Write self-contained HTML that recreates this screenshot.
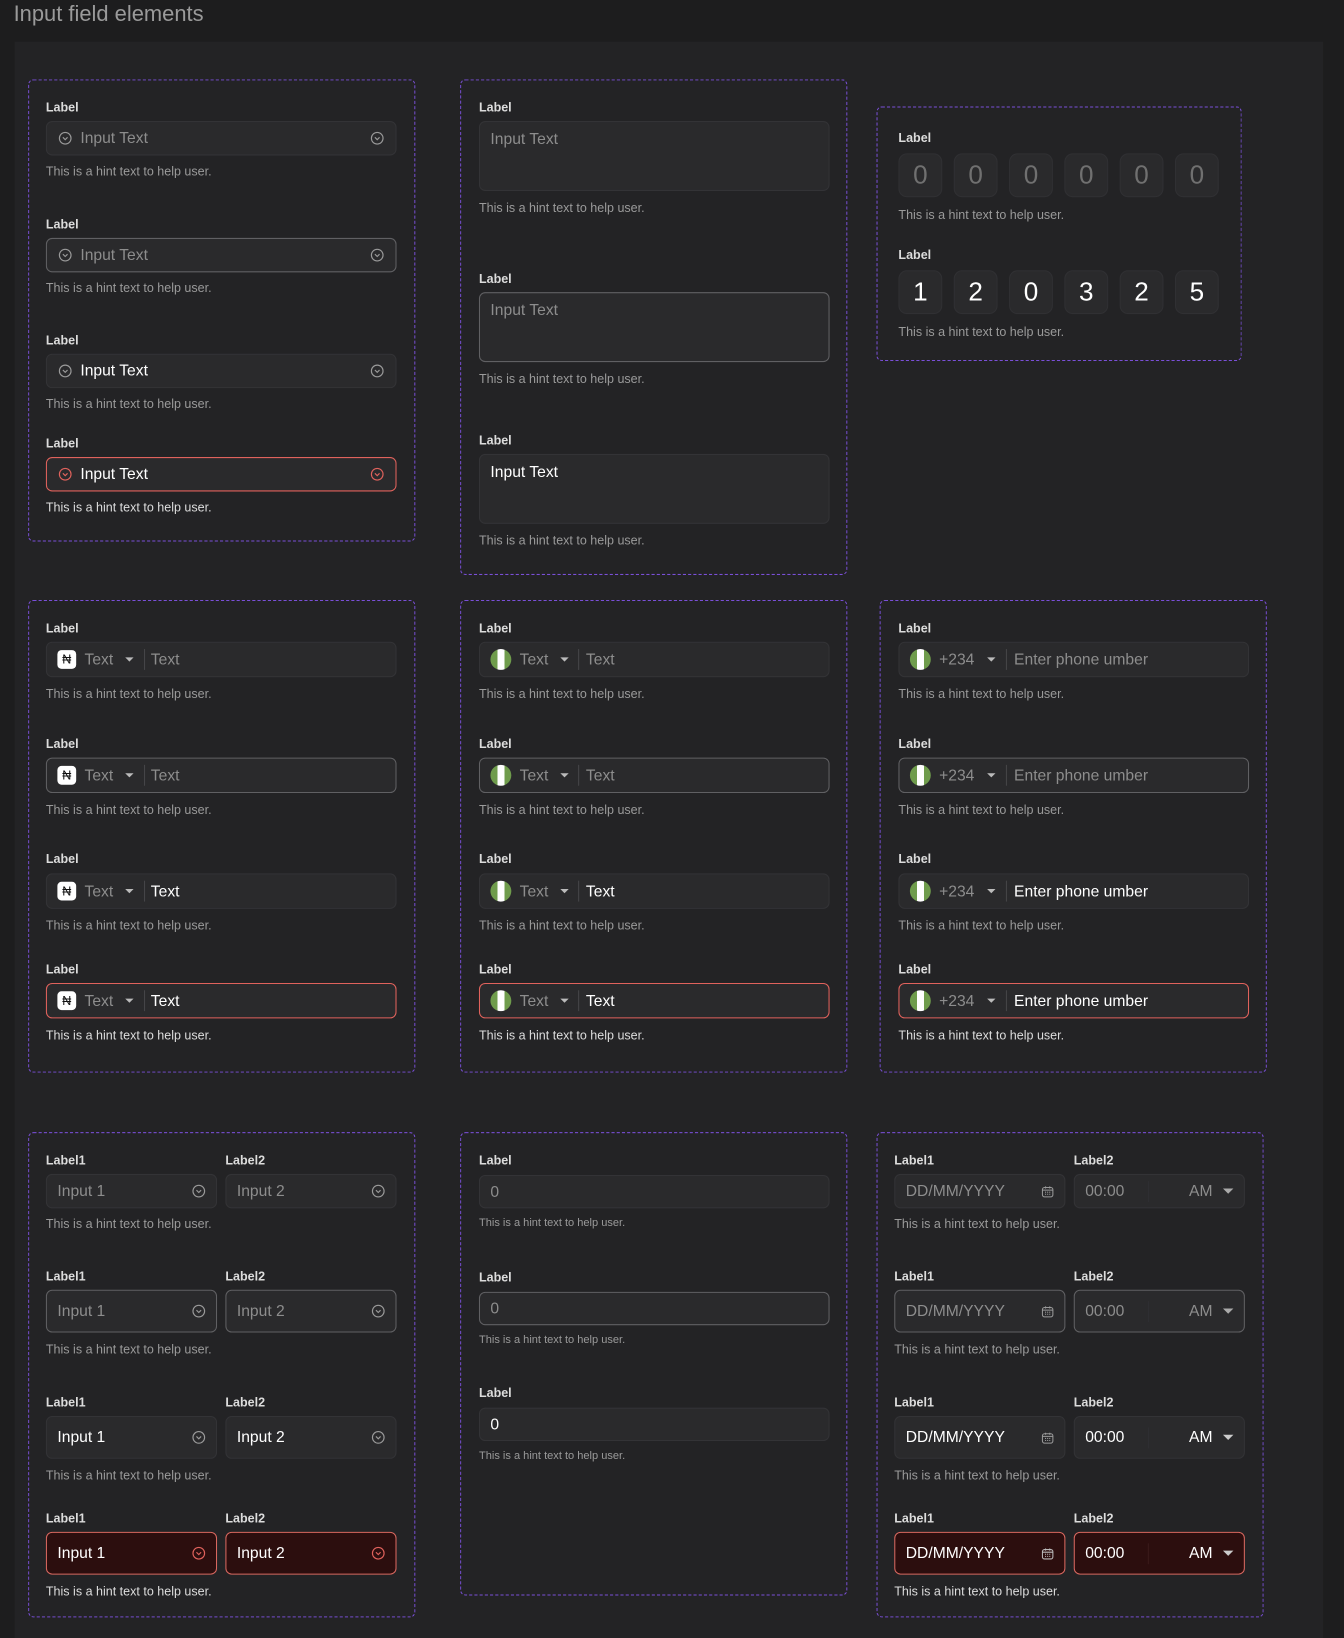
<!DOCTYPE html>
<html><head><meta charset="utf-8">
<style>
html,body{margin:0;padding:0;background:#1d1d1e;width:1344px;height:1636px;overflow:hidden;font-family:"Liberation Sans",sans-serif}
#s{position:absolute;left:0;top:0;width:1288px;height:1568px;transform:scale(1.04348);transform-origin:0 0}
.t{position:absolute;left:13px;top:2px;font-size:21px;color:#9a9a9a}
.p{position:absolute;left:14px;top:40px;width:1254px;height:1530px;background:#232325}
.b{position:absolute;border:1px dashed #7a4fd8;border-radius:5px;box-sizing:border-box}
.l{position:absolute;font-size:12px;font-weight:bold;color:#dcdcdc;line-height:14px;margin-top:0px}
.h{position:absolute;font-size:12px;color:#9a9a9a;line-height:14px;margin-top:0px}
.hs{font-size:10.6px}
.i{position:absolute;box-sizing:border-box;background:#2a2a2c;border:1px solid #333336;border-radius:6px;display:flex;align-items:center;font-size:15px;color:#8d8d8d;white-space:nowrap}
.hv{border-color:#606063}
.fl{color:#fff}
.er{border-color:#e0625c;color:#fff}
.erf{background:#2c0e0e;border-color:#d8675f;color:#fff}
.i svg{flex:none}
.ic{color:#9a9a9a}
.er .ic,.erf .ic{color:#e0625c}
.c{width:0;height:0;border-left:4px solid transparent;border-right:4px solid transparent;border-top:4px solid #bbb;flex:none}
.d{width:1px;height:20px;background:#454548;flex:none}
.fg{width:20px;height:20px;border-radius:50%;background:linear-gradient(90deg,#6f9c4c 33%,#fff 33%,#fff 67%,#6f9c4c 67%);flex:none}
.ng{width:18px;height:18px;border-radius:4px;background:#fff;color:#111;font-size:12px;display:flex;align-items:center;justify-content:center;flex:none}
.o{position:absolute;width:42px;height:42px;box-sizing:border-box;background:#2a2a2c;border:1px solid #303033;border-radius:8px;display:flex;align-items:center;justify-content:center;font-size:25px;color:#707070}
.o.w{color:#fff}
.ta{align-items:flex-start;padding:8px 10px}
</style></head><body><div id="s">
<div class="t">Input field elements</div>
<div class="p"></div>

<!-- col1 row1 -->
<div class="b" style="left:27px;top:76px;width:371px;height:443px"></div>
<div class="l" style="left:44px;top:96px">Label</div>
<div class="i" style="left:44px;top:116px;width:336px;height:33px;padding:0 11px"><svg class="ic" width="13" height="13" viewBox="0 0 14 14"><circle cx="7" cy="7" r="6" fill="none" stroke="currentColor" stroke-width="1.2"/><path d="M4.6 6l2.4 2.4L9.4 6" fill="none" stroke="currentColor" stroke-width="1.2"/></svg><span style="margin-left:8px;flex:1">Input Text</span><svg class="ic" width="13" height="13" viewBox="0 0 14 14"><circle cx="7" cy="7" r="6" fill="none" stroke="currentColor" stroke-width="1.2"/><path d="M4.6 6l2.4 2.4L9.4 6" fill="none" stroke="currentColor" stroke-width="1.2"/></svg></div>
<div class="h" style="left:44px;top:157px">This is a hint text to help user.</div>
<div class="l" style="left:44px;top:208px">Label</div>
<div class="i hv" style="left:44px;top:228px;width:336px;height:33px;padding:0 11px"><svg class="ic" width="13" height="13" viewBox="0 0 14 14"><circle cx="7" cy="7" r="6" fill="none" stroke="currentColor" stroke-width="1.2"/><path d="M4.6 6l2.4 2.4L9.4 6" fill="none" stroke="currentColor" stroke-width="1.2"/></svg><span style="margin-left:8px;flex:1">Input Text</span><svg class="ic" width="13" height="13" viewBox="0 0 14 14"><circle cx="7" cy="7" r="6" fill="none" stroke="currentColor" stroke-width="1.2"/><path d="M4.6 6l2.4 2.4L9.4 6" fill="none" stroke="currentColor" stroke-width="1.2"/></svg></div>
<div class="h" style="left:44px;top:269px">This is a hint text to help user.</div>
<div class="l" style="left:44px;top:319px">Label</div>
<div class="i fl" style="left:44px;top:339px;width:336px;height:33px;padding:0 11px"><svg class="ic" width="13" height="13" viewBox="0 0 14 14"><circle cx="7" cy="7" r="6" fill="none" stroke="currentColor" stroke-width="1.2"/><path d="M4.6 6l2.4 2.4L9.4 6" fill="none" stroke="currentColor" stroke-width="1.2"/></svg><span style="margin-left:8px;flex:1">Input Text</span><svg class="ic" width="13" height="13" viewBox="0 0 14 14"><circle cx="7" cy="7" r="6" fill="none" stroke="currentColor" stroke-width="1.2"/><path d="M4.6 6l2.4 2.4L9.4 6" fill="none" stroke="currentColor" stroke-width="1.2"/></svg></div>
<div class="h" style="left:44px;top:380px">This is a hint text to help user.</div>
<div class="l" style="left:44px;top:418px">Label</div>
<div class="i er" style="left:44px;top:438px;width:336px;height:33px;padding:0 11px"><svg class="ic" width="13" height="13" viewBox="0 0 14 14"><circle cx="7" cy="7" r="6" fill="none" stroke="currentColor" stroke-width="1.2"/><path d="M4.6 6l2.4 2.4L9.4 6" fill="none" stroke="currentColor" stroke-width="1.2"/></svg><span style="margin-left:8px;flex:1">Input Text</span><svg class="ic" width="13" height="13" viewBox="0 0 14 14"><circle cx="7" cy="7" r="6" fill="none" stroke="currentColor" stroke-width="1.2"/><path d="M4.6 6l2.4 2.4L9.4 6" fill="none" stroke="currentColor" stroke-width="1.2"/></svg></div>
<div class="h" style="left:44px;top:479px;color:#ddd">This is a hint text to help user.</div>

<!-- col2 row1 -->
<div class="b" style="left:441px;top:76px;width:371px;height:475px"></div>
<div class="l" style="left:459px;top:96px">Label</div>
<div class="i ta" style="left:459px;top:116px;width:336px;height:67px">Input Text</div>
<div class="h" style="left:459px;top:192px">This is a hint text to help user.</div>
<div class="l" style="left:459px;top:260px">Label</div>
<div class="i ta hv" style="left:459px;top:280px;width:336px;height:67px">Input Text</div>
<div class="h" style="left:459px;top:356px">This is a hint text to help user.</div>
<div class="l" style="left:459px;top:415px">Label</div>
<div class="i ta fl" style="left:459px;top:435px;width:336px;height:67px">Input Text</div>
<div class="h" style="left:459px;top:511px">This is a hint text to help user.</div>

<!-- col3 OTP -->
<div class="b" style="left:840px;top:102px;width:350px;height:244px"></div>
<div class="l" style="left:861px;top:125px">Label</div>
<div class="o" style="left:861px;top:147px">0</div><div class="o" style="left:914px;top:147px">0</div><div class="o" style="left:967px;top:147px">0</div><div class="o" style="left:1020px;top:147px">0</div><div class="o" style="left:1073px;top:147px">0</div><div class="o" style="left:1126px;top:147px">0</div>
<div class="h" style="left:861px;top:199px">This is a hint text to help user.</div>
<div class="l" style="left:861px;top:237px">Label</div>
<div class="o w" style="left:861px;top:259px">1</div><div class="o w" style="left:914px;top:259px">2</div><div class="o w" style="left:967px;top:259px">0</div><div class="o w" style="left:1020px;top:259px">3</div><div class="o w" style="left:1073px;top:259px">2</div><div class="o w" style="left:1126px;top:259px">5</div>
<div class="h" style="left:861px;top:311px">This is a hint text to help user.</div>

<!-- row2 col1 -->
<div class="b" style="left:27px;top:575px;width:371px;height:453px"></div>
<div class="l" style="left:44px;top:595px">Label</div>
<div class="i" style="left:44px;top:615px;width:336px;height:34px;padding:0 10px"><div class="ng">₦</div><span style="margin-left:8px">Text</span><div class="c" style="margin-left:11px"></div><div class="d" style="margin-left:10px"></div><span style="margin-left:6px">Text</span></div>
<div class="h" style="left:44px;top:658px">This is a hint text to help user.</div>
<div class="l" style="left:44px;top:706px">Label</div>
<div class="i hv" style="left:44px;top:726px;width:336px;height:34px;padding:0 10px"><div class="ng">₦</div><span style="margin-left:8px">Text</span><div class="c" style="margin-left:11px"></div><div class="d" style="margin-left:10px"></div><span style="margin-left:6px">Text</span></div>
<div class="h" style="left:44px;top:769px">This is a hint text to help user.</div>
<div class="l" style="left:44px;top:816px">Label</div>
<div class="i" style="left:44px;top:837px;width:336px;height:34px;padding:0 10px"><div class="ng">₦</div><span style="margin-left:8px">Text</span><div class="c" style="margin-left:11px"></div><div class="d" style="margin-left:10px"></div><span style="margin-left:6px;color:#fff">Text</span></div>
<div class="h" style="left:44px;top:880px">This is a hint text to help user.</div>
<div class="l" style="left:44px;top:922px">Label</div>
<div class="i er" style="left:44px;top:942px;width:336px;height:34px;padding:0 10px"><div class="ng">₦</div><span style="margin-left:8px;color:#8d8d8d">Text</span><div class="c" style="margin-left:11px"></div><div class="d" style="margin-left:10px"></div><span style="margin-left:6px">Text</span></div>
<div class="h" style="left:44px;top:985px;color:#ddd">This is a hint text to help user.</div>

<!-- row2 col2 -->
<div class="b" style="left:441px;top:575px;width:371px;height:453px"></div>
<div class="l" style="left:459px;top:595px">Label</div>
<div class="i" style="left:459px;top:615px;width:336px;height:34px;padding:0 10px"><div class="fg"></div><span style="margin-left:8px">Text</span><div class="c" style="margin-left:11px"></div><div class="d" style="margin-left:9px"></div><span style="margin-left:7px">Text</span></div>
<div class="h" style="left:459px;top:658px">This is a hint text to help user.</div>
<div class="l" style="left:459px;top:706px">Label</div>
<div class="i hv" style="left:459px;top:726px;width:336px;height:34px;padding:0 10px"><div class="fg"></div><span style="margin-left:8px">Text</span><div class="c" style="margin-left:11px"></div><div class="d" style="margin-left:9px"></div><span style="margin-left:7px">Text</span></div>
<div class="h" style="left:459px;top:769px">This is a hint text to help user.</div>
<div class="l" style="left:459px;top:816px">Label</div>
<div class="i" style="left:459px;top:837px;width:336px;height:34px;padding:0 10px"><div class="fg"></div><span style="margin-left:8px">Text</span><div class="c" style="margin-left:11px"></div><div class="d" style="margin-left:9px"></div><span style="margin-left:7px;color:#fff">Text</span></div>
<div class="h" style="left:459px;top:880px">This is a hint text to help user.</div>
<div class="l" style="left:459px;top:922px">Label</div>
<div class="i er" style="left:459px;top:942px;width:336px;height:34px;padding:0 10px"><div class="fg"></div><span style="margin-left:8px;color:#8d8d8d">Text</span><div class="c" style="margin-left:11px"></div><div class="d" style="margin-left:9px"></div><span style="margin-left:7px">Text</span></div>
<div class="h" style="left:459px;top:985px;color:#ddd">This is a hint text to help user.</div>

<!-- row2 col3 -->
<div class="b" style="left:843px;top:575px;width:371px;height:453px"></div>
<div class="l" style="left:861px;top:595px">Label</div>
<div class="i" style="left:861px;top:615px;width:336px;height:34px;padding:0 10px"><div class="fg"></div><span style="margin-left:8px">+234</span><div class="c" style="margin-left:12px"></div><div class="d" style="margin-left:10px"></div><span style="margin-left:7px">Enter phone umber</span></div>
<div class="h" style="left:861px;top:658px">This is a hint text to help user.</div>
<div class="l" style="left:861px;top:706px">Label</div>
<div class="i hv" style="left:861px;top:726px;width:336px;height:34px;padding:0 10px"><div class="fg"></div><span style="margin-left:8px">+234</span><div class="c" style="margin-left:12px"></div><div class="d" style="margin-left:10px"></div><span style="margin-left:7px">Enter phone umber</span></div>
<div class="h" style="left:861px;top:769px">This is a hint text to help user.</div>
<div class="l" style="left:861px;top:816px">Label</div>
<div class="i" style="left:861px;top:837px;width:336px;height:34px;padding:0 10px"><div class="fg"></div><span style="margin-left:8px">+234</span><div class="c" style="margin-left:12px"></div><div class="d" style="margin-left:10px"></div><span style="margin-left:7px;color:#fff">Enter phone umber</span></div>
<div class="h" style="left:861px;top:880px">This is a hint text to help user.</div>
<div class="l" style="left:861px;top:922px">Label</div>
<div class="i er" style="left:861px;top:942px;width:336px;height:34px;padding:0 10px"><div class="fg"></div><span style="margin-left:8px;color:#8d8d8d">+234</span><div class="c" style="margin-left:12px"></div><div class="d" style="margin-left:10px"></div><span style="margin-left:7px">Enter phone umber</span></div>
<div class="h" style="left:861px;top:985px;color:#ddd">This is a hint text to help user.</div>

<!-- row3 col1 -->
<div class="b" style="left:27px;top:1085px;width:371px;height:465px"></div>
<div class="l" style="left:44px;top:1105px">Label1</div><div class="l" style="left:216px;top:1105px">Label2</div>
<div class="i" style="left:44px;top:1125px;width:164px;height:33px;padding:0 10px"><span style="flex:1">Input 1</span><svg class="ic" width="13" height="13" viewBox="0 0 14 14"><circle cx="7" cy="7" r="6" fill="none" stroke="currentColor" stroke-width="1.2"/><path d="M4.6 6l2.4 2.4L9.4 6" fill="none" stroke="currentColor" stroke-width="1.2"/></svg></div>
<div class="i" style="left:216px;top:1125px;width:164px;height:33px;padding:0 10px"><span style="flex:1">Input 2</span><svg class="ic" width="13" height="13" viewBox="0 0 14 14"><circle cx="7" cy="7" r="6" fill="none" stroke="currentColor" stroke-width="1.2"/><path d="M4.6 6l2.4 2.4L9.4 6" fill="none" stroke="currentColor" stroke-width="1.2"/></svg></div>
<div class="h" style="left:44px;top:1166px">This is a hint text to help user.</div>
<div class="l" style="left:44px;top:1216px">Label1</div><div class="l" style="left:216px;top:1216px">Label2</div>
<div class="i hv" style="left:44px;top:1236px;width:164px;height:41px;padding:0 10px"><span style="flex:1">Input 1</span><svg class="ic" width="13" height="13" viewBox="0 0 14 14"><circle cx="7" cy="7" r="6" fill="none" stroke="currentColor" stroke-width="1.2"/><path d="M4.6 6l2.4 2.4L9.4 6" fill="none" stroke="currentColor" stroke-width="1.2"/></svg></div>
<div class="i hv" style="left:216px;top:1236px;width:164px;height:41px;padding:0 10px"><span style="flex:1">Input 2</span><svg class="ic" width="13" height="13" viewBox="0 0 14 14"><circle cx="7" cy="7" r="6" fill="none" stroke="currentColor" stroke-width="1.2"/><path d="M4.6 6l2.4 2.4L9.4 6" fill="none" stroke="currentColor" stroke-width="1.2"/></svg></div>
<div class="h" style="left:44px;top:1286px">This is a hint text to help user.</div>
<div class="l" style="left:44px;top:1337px">Label1</div><div class="l" style="left:216px;top:1337px">Label2</div>
<div class="i fl" style="left:44px;top:1357px;width:164px;height:41px;padding:0 10px"><span style="flex:1">Input 1</span><svg class="ic" width="13" height="13" viewBox="0 0 14 14"><circle cx="7" cy="7" r="6" fill="none" stroke="currentColor" stroke-width="1.2"/><path d="M4.6 6l2.4 2.4L9.4 6" fill="none" stroke="currentColor" stroke-width="1.2"/></svg></div>
<div class="i fl" style="left:216px;top:1357px;width:164px;height:41px;padding:0 10px"><span style="flex:1">Input 2</span><svg class="ic" width="13" height="13" viewBox="0 0 14 14"><circle cx="7" cy="7" r="6" fill="none" stroke="currentColor" stroke-width="1.2"/><path d="M4.6 6l2.4 2.4L9.4 6" fill="none" stroke="currentColor" stroke-width="1.2"/></svg></div>
<div class="h" style="left:44px;top:1407px">This is a hint text to help user.</div>
<div class="l" style="left:44px;top:1448px">Label1</div><div class="l" style="left:216px;top:1448px">Label2</div>
<div class="i erf" style="left:44px;top:1468px;width:164px;height:41px;padding:0 10px"><span style="flex:1">Input 1</span><svg class="ic" width="13" height="13" viewBox="0 0 14 14"><circle cx="7" cy="7" r="6" fill="none" stroke="currentColor" stroke-width="1.2"/><path d="M4.6 6l2.4 2.4L9.4 6" fill="none" stroke="currentColor" stroke-width="1.2"/></svg></div>
<div class="i erf" style="left:216px;top:1468px;width:164px;height:41px;padding:0 10px"><span style="flex:1">Input 2</span><svg class="ic" width="13" height="13" viewBox="0 0 14 14"><circle cx="7" cy="7" r="6" fill="none" stroke="currentColor" stroke-width="1.2"/><path d="M4.6 6l2.4 2.4L9.4 6" fill="none" stroke="currentColor" stroke-width="1.2"/></svg></div>
<div class="h" style="left:44px;top:1518px;color:#ddd">This is a hint text to help user.</div>

<!-- row3 col2 -->
<div class="b" style="left:441px;top:1085px;width:371px;height:444px"></div>
<div class="l" style="left:459px;top:1105px">Label</div>
<div class="i" style="left:459px;top:1126px;width:336px;height:32px;padding:0 10px">0</div>
<div class="h hs" style="left:459px;top:1165px">This is a hint text to help user.</div>
<div class="l" style="left:459px;top:1217px">Label</div>
<div class="i hv" style="left:459px;top:1238px;width:336px;height:32px;padding:0 10px">0</div>
<div class="h hs" style="left:459px;top:1277px">This is a hint text to help user.</div>
<div class="l" style="left:459px;top:1328px">Label</div>
<div class="i fl" style="left:459px;top:1349px;width:336px;height:32px;padding:0 10px">0</div>
<div class="h hs" style="left:459px;top:1388px">This is a hint text to help user.</div>

<!-- row3 col3 -->
<div class="b" style="left:840px;top:1085px;width:371px;height:465px"></div>
<div class="l" style="left:857px;top:1105px">Label1</div><div class="l" style="left:1029px;top:1105px">Label2</div>
<div class="i" style="left:857px;top:1125px;width:164px;height:33px;padding:0 10px"><span style="flex:1">DD/MM/YYYY</span><svg class="ic" width="12" height="12" viewBox="0 0 12 12"><rect x="1" y="2" width="10" height="9" rx="2" fill="none" stroke="currentColor"/><path d="M1 4.5h10M4 1v2M8 1v2M3.5 6.5h1M5.5 6.5h1M7.5 6.5h1M3.5 8.5h1M5.5 8.5h1M7.5 8.5h1" stroke="currentColor"/></svg></div>
<div class="i" style="left:1029px;top:1125px;width:164px;height:33px;padding:0 10px"><span>00:00</span><div class="d" style="margin-left:22px;background:#303033"></div><span style="margin-left:auto">AM</span><div class="c" style="margin-left:10px;border-top-color:#aaa;border-left-width:5px;border-right-width:5px;border-top-width:5px"></div></div>
<div class="h" style="left:857px;top:1166px">This is a hint text to help user.</div>
<div class="l" style="left:857px;top:1216px">Label1</div><div class="l" style="left:1029px;top:1216px">Label2</div>
<div class="i hv" style="left:857px;top:1236px;width:164px;height:41px;padding:0 10px"><span style="flex:1">DD/MM/YYYY</span><svg class="ic" width="12" height="12" viewBox="0 0 12 12"><rect x="1" y="2" width="10" height="9" rx="2" fill="none" stroke="currentColor"/><path d="M1 4.5h10M4 1v2M8 1v2M3.5 6.5h1M5.5 6.5h1M7.5 6.5h1M3.5 8.5h1M5.5 8.5h1M7.5 8.5h1" stroke="currentColor"/></svg></div>
<div class="i hv" style="left:1029px;top:1236px;width:164px;height:41px;padding:0 10px"><span>00:00</span><div class="d" style="margin-left:22px;background:#303033"></div><span style="margin-left:auto">AM</span><div class="c" style="margin-left:10px;border-top-color:#aaa;border-left-width:5px;border-right-width:5px;border-top-width:5px"></div></div>
<div class="h" style="left:857px;top:1286px">This is a hint text to help user.</div>
<div class="l" style="left:857px;top:1337px">Label1</div><div class="l" style="left:1029px;top:1337px">Label2</div>
<div class="i fl" style="left:857px;top:1357px;width:164px;height:41px;padding:0 10px"><span style="flex:1">DD/MM/YYYY</span><svg class="ic" width="12" height="12" viewBox="0 0 12 12"><rect x="1" y="2" width="10" height="9" rx="2" fill="none" stroke="currentColor"/><path d="M1 4.5h10M4 1v2M8 1v2M3.5 6.5h1M5.5 6.5h1M7.5 6.5h1M3.5 8.5h1M5.5 8.5h1M7.5 8.5h1" stroke="currentColor"/></svg></div>
<div class="i fl" style="left:1029px;top:1357px;width:164px;height:41px;padding:0 10px"><span>00:00</span><div class="d" style="margin-left:22px;background:#303033"></div><span style="margin-left:auto">AM</span><div class="c" style="margin-left:10px;border-top-color:#ccc;border-left-width:5px;border-right-width:5px;border-top-width:5px"></div></div>
<div class="h" style="left:857px;top:1407px">This is a hint text to help user.</div>
<div class="l" style="left:857px;top:1448px">Label1</div><div class="l" style="left:1029px;top:1448px">Label2</div>
<div class="i erf" style="left:857px;top:1468px;width:164px;height:41px;padding:0 10px"><span style="flex:1">DD/MM/YYYY</span><svg style="color:#bbb" width="12" height="12" viewBox="0 0 12 12"><rect x="1" y="2" width="10" height="9" rx="2" fill="none" stroke="currentColor"/><path d="M1 4.5h10M4 1v2M8 1v2M3.5 6.5h1M5.5 6.5h1M7.5 6.5h1M3.5 8.5h1M5.5 8.5h1M7.5 8.5h1" stroke="currentColor"/></svg></div>
<div class="i erf" style="left:1029px;top:1468px;width:164px;height:41px;padding:0 10px"><span>00:00</span><div class="d" style="margin-left:22px;background:#3a1a1a"></div><span style="margin-left:auto">AM</span><div class="c" style="margin-left:10px;border-top-color:#ccc;border-left-width:5px;border-right-width:5px;border-top-width:5px"></div></div>
<div class="h" style="left:857px;top:1518px;color:#ddd">This is a hint text to help user.</div>
</div></body></html>
